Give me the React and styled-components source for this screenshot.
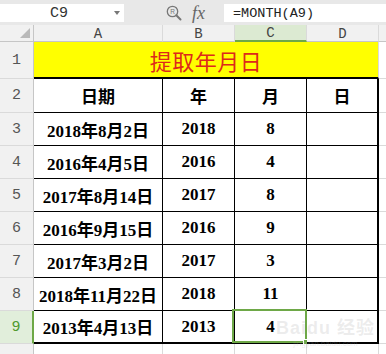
import React from 'react'
import styled, { createGlobalStyle } from 'styled-components'

const GlobalStyle = createGlobalStyle`
  html, body {
    margin: 0;
    padding: 0;
    background: #ffffff;
    overflow: hidden;
  }
`

const GRID = '1px solid #dadada'
const HEAD_LINE = '1px solid #c6c6c6'
const THIN = '1px solid #000'
const THICK = '2px solid #000'
const GREEN = '#6ea847'

const rows = [
  ['2018年8月2日', '2018', '8'],
  ['2016年4月5日', '2016', '4'],
  ['2017年8月14日', '2017', '8'],
  ['2016年9月15日', '2016', '9'],
  ['2017年3月2日', '2017', '3'],
  ['2018年11月22日', '2018', '11'],
  ['2013年4月13日', '2013', '4'],
]

const Page = styled.div`
  width: 386px;
  height: 354px;
  overflow: hidden;
  display: flex;
  flex-direction: column;
`

const FormulaBar = styled.div`
  display: flex;
  height: 28px;
  box-sizing: border-box;
  padding: 4px 0 3px;
  background: #e8e8e8;
`

const NameBox = styled.div`
  width: 124px;
  display: flex;
  align-items: center;
  background: #fff;
  font: 15px 'Liberation Mono', monospace;
  color: #333;
`

const NameText = styled.span`
  flex: 1;
  text-align: center;
  padding-left: 4px;
`

const Caret = styled.span`
  width: 0;
  height: 0;
  margin-right: 4px;
  border-left: 3px solid transparent;
  border-right: 3px solid transparent;
  border-top: 4px solid #777;
`

const Tools = styled.div`
  width: 100px;
  display: flex;
  align-items: center;
  justify-content: flex-end;
  gap: 10px;
  padding-right: 19px;
  box-sizing: border-box;
`

const Fx = styled.span`
  font: italic 18px 'Liberation Serif', serif;
  color: #666;
  line-height: 1;
`

const FormulaInput = styled.div`
  flex: 1;
  display: flex;
  align-items: center;
  padding-left: 9px;
  background: #fff;
  font: 13.5px 'Liberation Mono', monospace;
  color: #222;
`

const Sheet = styled.div`
  position: relative;
  display: grid;
  grid-template-columns: 34px 129px 72px 72px 72px 1fr;
  grid-template-rows: 17px 37px 34px repeat(7, 33px) 33px;
`

const Cell = styled.div`
  position: relative;
  display: flex;
  align-items: center;
  justify-content: center;
  box-sizing: border-box;
  border-right: ${p => p.$r || GRID};
  border-bottom: ${p => p.$b || GRID};
  background: ${p => p.$bg || '#fff'};
  font: bold 17px 'Liberation Serif', 'Noto Sans CJK SC', serif;
  color: #000;
  white-space: nowrap;
`

const HeadCell = styled(Cell)`
  background: ${p => (p.$active ? '#dcead2' : '#f1f1f1')};
  border-bottom: ${p => (p.$active ? `2px solid ${GREEN}` : HEAD_LINE)};
  font: 14px 'Liberation Mono', monospace;
  color: #444;
  padding-top: 1px;
`

const Corner = styled(HeadCell)`
  justify-content: flex-end;
  align-items: flex-end;
  padding: 0 3px 3px 0;
  border-right: ${HEAD_LINE};
`

const CornerMark = styled.span`
  width: 0;
  height: 0;
  border-left: 10px solid transparent;
  border-bottom: 10px solid #b9b9b9;
`

const RowHead = styled(Cell)`
  background: ${p => (p.$active ? '#e1eedb' : '#f1f1f1')};
  border-right: ${p => (p.$active ? `2px solid ${GREEN}` : HEAD_LINE)};
  font: 15px 'Liberation Mono', monospace;
  color: ${p => (p.$active ? '#4f9a2f' : '#555')};
`

const Title = styled(Cell)`
  grid-column: span 4;
  background: #ffff00;
  font: 22px 'Noto Sans CJK SC', sans-serif;
  color: #dd2a1b;
  letter-spacing: 0.5px;
`

const Selection = styled.div`
  position: absolute;
  top: -2px;
  left: -3px;
  right: -1px;
  bottom: -1px;
  border: 2px solid ${GREEN};
  pointer-events: none;

  &::after {
    content: '';
    position: absolute;
    right: -5px;
    bottom: -5px;
    width: 5px;
    height: 5px;
    background: ${GREEN};
    border: 1px solid #fff;
  }
`

const Watermark = styled.div`
  position: absolute;
  left: 276px;
  top: 288px;
  display: flex;
  flex-direction: column;
  align-items: center;
  color: rgba(180, 180, 180, 0.25);
  pointer-events: none;
`

const MarkTitle = styled.span`
  font: bold 18px 'Liberation Sans', 'Noto Sans CJK SC', sans-serif;
  letter-spacing: 1px;
`

const MarkUrl = styled.span`
  font: 8px 'Liberation Sans', sans-serif;
`

const Magnifier = () => (
  <svg width="16" height="16" viewBox="0 0 16 16">
    <circle cx="6.5" cy="6.5" r="5.2" fill="none" stroke="#777" strokeWidth="1.3" />
    <line x1="10.3" y1="10.3" x2="14.5" y2="14.5" stroke="#777" strokeWidth="2" strokeLinecap="round" />
    <text x="6.5" y="9" fontSize="6.5" textAnchor="middle" fill="#777" fontFamily="Liberation Sans, sans-serif">R</text>
  </svg>
)

const App = () => {
  const last = rows.length - 1

  return (
    <Page>
      <GlobalStyle />
      <FormulaBar>
        <NameBox>
          <NameText>C9</NameText>
          <Caret />
        </NameBox>
        <Tools>
          <Magnifier />
          <Fx>fx</Fx>
        </Tools>
        <FormulaInput>=MONTH(A9)</FormulaInput>
      </FormulaBar>

      <Sheet>
        <Corner>
          <CornerMark />
        </Corner>
        <HeadCell>A</HeadCell>
        <HeadCell>B</HeadCell>
        <HeadCell $active>C</HeadCell>
        <HeadCell>D</HeadCell>
        <HeadCell $r="none" />

        <RowHead>1</RowHead>
        <Title $b={THICK}>提取年月日</Title>
        <Cell $r="none" />

        <RowHead>2</RowHead>
        <Cell $r={THIN} $b={THIN}>日期</Cell>
        <Cell $r={THIN} $b={THIN}>年</Cell>
        <Cell $r={THIN} $b={THIN}>月</Cell>
        <Cell $r={THICK} $b={THIN}>日</Cell>
        <Cell $r="none" />

        {rows.map(([date, year, month], i) => {
          const bottom = i === last ? THICK : THIN
          const active = i === last
          return (
            <React.Fragment key={date}>
              <RowHead $active={active}>{i + 3}</RowHead>
              <Cell $r={THIN} $b={bottom}>{date}</Cell>
              <Cell $r={THIN} $b={bottom}>{year}</Cell>
              <Cell $r={THIN} $b={bottom}>
                {month}
                {active && <Selection />}
              </Cell>
              <Cell $r={THICK} $b={bottom} />
              <Cell $r="none" />
            </React.Fragment>
          )
        })}

        <RowHead>10</RowHead>
        <Cell />
        <Cell />
        <Cell />
        <Cell />
        <Cell $r="none" />

        <Watermark>
          <MarkTitle>Baidu 经验</MarkTitle>
          <MarkUrl>jingyan.baidu.com</MarkUrl>
        </Watermark>
      </Sheet>
    </Page>
  )
}

export default App
